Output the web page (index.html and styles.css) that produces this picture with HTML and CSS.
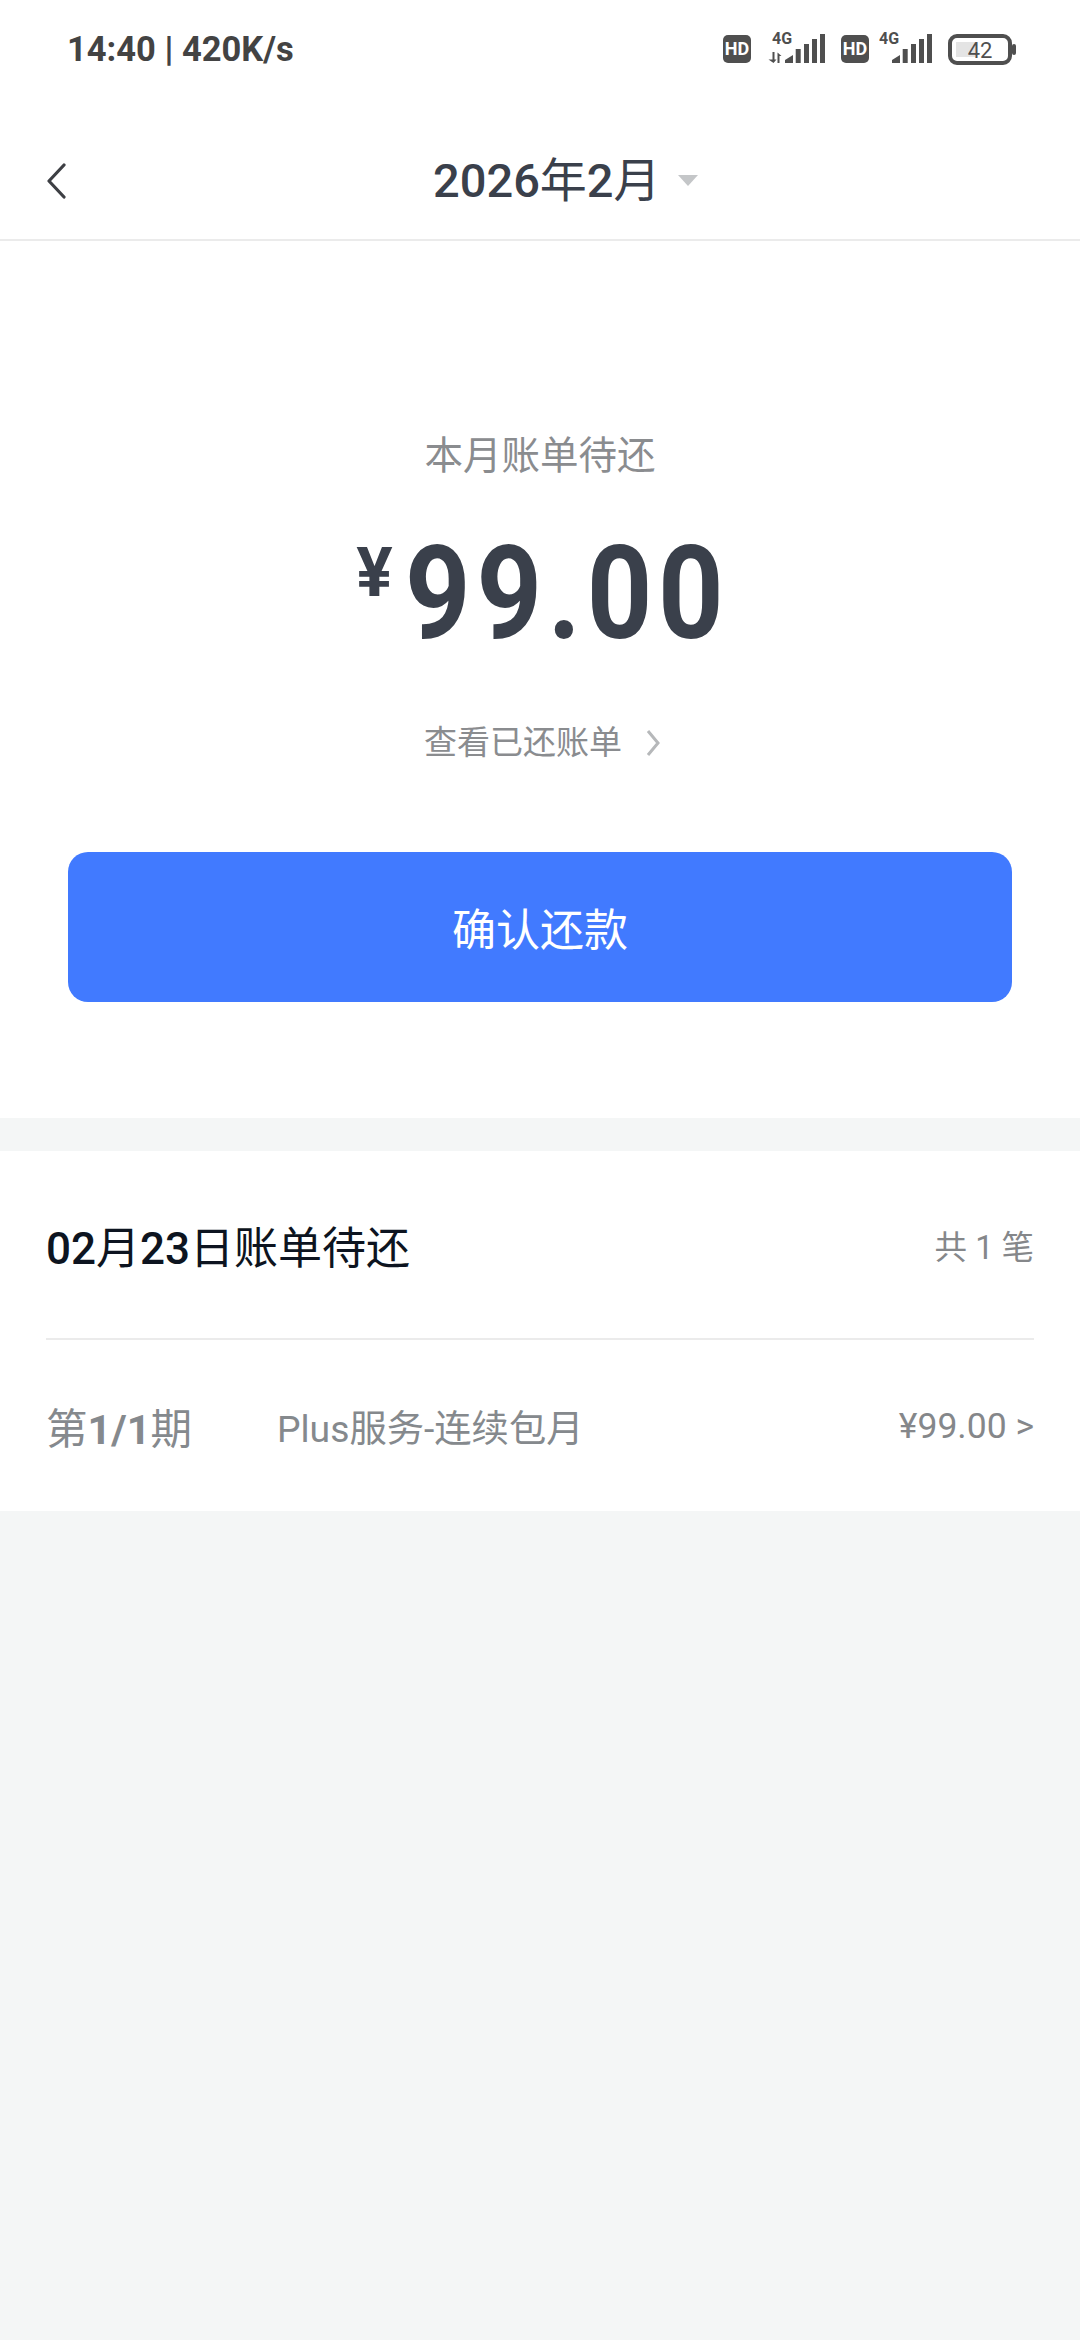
FILE: index.html
```html
<!DOCTYPE html>
<html lang="zh-CN">
<head>
    <meta charset="UTF-8">
    <meta name="viewport" content="width=device-width, initial-scale=1.0">
    <title>账单</title>
    <link rel="stylesheet" href="styles.css">
</head>
<body>
    <div class="top">
        <div class="status-bar">
            <span class="status-text">14:40 <b>|</b> 420K/s</span>
            <div class="status-icons">
                <svg class="icon-hd" width="28" height="28" viewBox="0 0 28 28">
                    <rect width="28" height="28" rx="5" fill="#4f4f4f"/>
                    <text x="14" y="20" text-anchor="middle" class="hd-label">HD</text>
                </svg>
                <!-- first sim: network arrows under the 4G mark -->
                <svg class="icon-cell" width="57" height="36" viewBox="0 -4 57 36">
                    <text x="4" y="12" class="net-label">4G</text>
                    <path d="M4.500 20h2v7.500h2L5.500 31 0.500 27.500h4zM9.500 20.500l4 3.500h-2v7h-2z" fill="#4f4f4f"/>
                    <path d="M17 31v-3l8-5v8zM27.700 17h5v14h-5zM36 12h5v19h-5zM44 7h5v24h-5zM52 2h5v29h-5z" fill="#4f4f4f"/>
                </svg>
                <svg class="icon-hd icon-hd-near" width="28" height="28" viewBox="0 0 28 28">
                    <rect width="28" height="28" rx="5" fill="#4f4f4f"/>
                    <text x="14" y="20" text-anchor="middle" class="hd-label">HD</text>
                </svg>
                <svg class="icon-cell" width="53" height="36" viewBox="0 -4 53 36">
                    <text x="0" y="12" class="net-label">4G</text>
                    <path d="M13 31v-3l8-5v8zM23.700 17h5v14h-5zM32 12h5v19h-5zM40 7h5v24h-5zM48 2h5v29h-5z" fill="#4f4f4f"/>
                </svg>
                <svg class="icon-battery" width="68" height="32" viewBox="0 0 68 32">
                    <rect x="2" y="3" width="60" height="27" rx="7" fill="#fff" stroke="#4f4f4f" stroke-width="4"/>
                    <rect x="8" y="9" width="19" height="15" fill="#e4e4e4"/>
                    <rect x="64" y="11" width="4" height="11" rx="2" fill="#4f4f4f"/>
                    <text x="32" y="25" text-anchor="middle" class="battery-label">42</text>
                </svg>
            </div>
        </div>
        <div class="nav-bar">
            <svg class="back" width="20" height="36" viewBox="0 0 20 36">
                <path d="M17 2 2 18l15 16" fill="none" stroke="#3d3f44" stroke-width="3.200" stroke-linecap="round" stroke-linejoin="round"/>
            </svg>
            <div class="month">
                <span><b>2026</b>年<b>2</b>月</span>
                <i class="caret"></i>
            </div>
        </div>
    </div>

    <section class="summary">
        <p class="summary-label">本月账单待还</p>
        <div class="amount">
            <span class="amount-unit">¥</span>
            <span class="amount-value">99.00</span>
        </div>
        <a class="paid-link">
            <span>查看已还账单</span>
            <svg width="14" height="28" viewBox="0 0 14 28">
                <path d="M2 2l10 12L2 26" fill="none" stroke="#b6b8ba" stroke-width="3"/>
            </svg>
        </a>
        <button class="confirm">确认还款</button>
    </section>

    <section class="bills">
        <div class="bills-head">
            <span class="bills-title"><b>02</b>月<b>23</b>日账单待还</span>
            <span class="bills-count">共 1 笔</span>
        </div>
        <div class="bill-row">
            <span class="bill-term">第<b>1/1</b>期</span>
            <span class="bill-name">Plus服务-连续包月</span>
            <span class="bill-price">¥99.00 &gt;</span>
        </div>
    </section>
</body>
</html>
```

FILE: styles.css
```css
body {
    margin: 0;
    height: 2340px;
    background-color: #f4f6f6;
    color: #3a404b;
    font-family: Roboto, "Noto Sans CJK SC", sans-serif;
}

.top {
    background-color: #ffffff;
    border-bottom: 2px solid #ebebeb;
}

.status-bar {
    height: 98px;
    padding: 0 64px 0 67px;
    display: flex;
    justify-content: space-between;
    align-items: center;
}

.status-text {
    color: #434343;
    font-size: 34.500px;
    font-weight: 700;
}

.status-text b {
    font-weight: 900;
}

.status-icons {
    display: flex;
    align-items: center;
}

.status-icons svg {
    display: block;
}

.icon-hd {
    margin-right: 17px;
}

.icon-hd-near {
    margin-right: 10px;
}

.icon-cell {
    margin-right: 16px;
    margin-bottom: 6px;
}

.hd-label {
    fill: #ffffff;
    font-size: 18px;
    font-weight: 700;
}

.net-label {
    fill: #4f4f4f;
    font-size: 16px;
    font-weight: 700;
}

.battery-label {
    fill: #4f4f4f;
    font-size: 22px;
}

.nav-bar {
    height: 117px;
    padding: 24px 0 0 47px;
    display: flex;
    align-items: center;
    position: relative;
}

.back {
    display: block;
}

.month {
    position: absolute;
    left: 433px;
    top: 44px;
    display: flex;
    align-items: center;
    color: #3a404b;
    font-size: 47px;
}

.month b {
    font-weight: 500;
}

.caret {
    margin: 8px 0 0 17px;
    border-left: 10px solid transparent;
    border-right: 10px solid transparent;
    border-top: 11px solid #c4c6c8;
}

.summary {
    background-color: #ffffff;
    height: 877px;
    padding: 0 68px;
    display: flex;
    flex-direction: column;
    align-items: center;
}

.summary-label {
    margin: 190px 0 0;
    color: #8a8c8f;
    font-size: 38.500px;
    line-height: 50px;
}

.amount {
    margin: 48px 0 0 6px;
    display: flex;
    align-items: flex-start;
    height: 130px;
}

.amount-unit {
    font-size: 68px;
    font-weight: 700;
    line-height: 90px;
    margin-right: 12px;
    margin-top: -1px;
}

/* condensed numerals: Roboto squeezed to the width of the figures */
.amount-value {
    margin: 0 -21.700px;
    font-size: 130px;
    font-weight: 700;
    line-height: 130px;
    letter-spacing: 6.500px;
    transform: scaleX(0.88);
}

.paid-link {
    margin: 61px 0 0 4px;
    display: flex;
    align-items: center;
    gap: 24px;
    color: #8a8c8f;
    font-size: 33px;
    line-height: 46px;
}

.confirm {
    margin-top: 86px;
    width: 100%;
    height: 150px;
    border: none;
    border-radius: 20px;
    background-color: #417aff;
    color: #ffffff;
    font-family: inherit;
    font-size: 44px;
}

.bills {
    margin-top: 33px;
    height: 360px;
    padding: 0 46px;
    background-color: #ffffff;
}

.bills-head {
    height: 187px;
    border-bottom: 2px solid #ebebeb;
    display: flex;
    justify-content: space-between;
    align-items: center;
}

.bills-title {
    color: #0d1420;
    font-size: 44px;
}

.bills-title b {
    font-weight: 500;
}

.bills-count {
    color: #85878a;
    font-size: 32.500px;
}

.bill-row {
    height: 171px;
    display: flex;
    align-items: center;
}

.bill-term {
    width: 231px;
    color: #85898d;
    font-size: 41.500px;
}

.bill-term b {
    font-weight: 700;
}

.bill-name {
    flex: 1;
    color: #85898d;
    font-size: 37.300px;
}

.bill-price {
    color: #85878a;
    font-size: 35.500px;
}
```
